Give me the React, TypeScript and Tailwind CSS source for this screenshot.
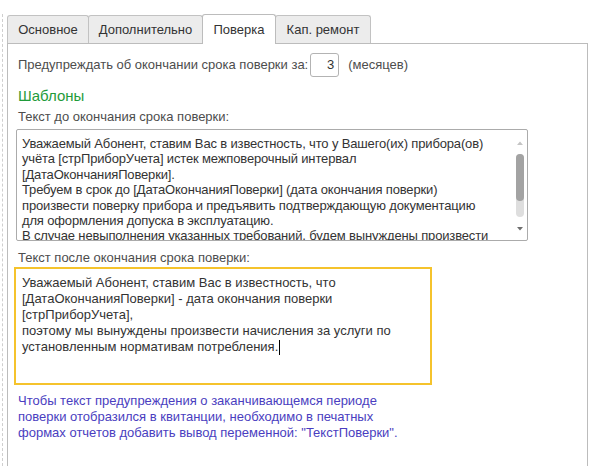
import React from 'react';

const beforeText = [
  'Уважаемый Абонент, ставим Вас в известность, что у Вашего(их) прибора(ов)',
  'учёта [стрПриборУчета] истек межповерочный интервал',
  '[ДатаОкончанияПоверки].',
  'Требуем в срок до [ДатаОкончанияПоверки] (дата окончания поверки)',
  'произвести поверку прибора и предъявить подтверждающую документацию',
  'для оформления допуска в эксплуатацию.',
  'В случае невыполнения указанных требований, будем вынуждены произвести',
];

const afterText = [
  'Уважаемый Абонент, ставим Вас в известность, что',
  '[ДатаОкончанияПоверки] - дата окончания поверки',
  '[стрПриборУчета],',
  'поэтому мы вынуждены произвести начисления за услуги по',
];

const hint = [
  'Чтобы текст предупреждения о заканчивающемся периоде',
  'поверки отобразился в квитанции, необходимо в печатных',
  'формах отчетов добавить вывод переменной: "ТекстПоверки".',
];

const tabs = [
  { label: 'Основное', w: 'w-[82px]' },
  { label: 'Дополнительно', w: 'w-[115px]' },
  { label: 'Поверка', w: 'w-[74px]', active: true },
  { label: 'Кап. ремонт', w: 'w-[96px]' },
];

function Scrollbar() {
  return (
    <div className="absolute right-[3px] top-[10px] w-[8px] flex flex-col items-center">
      <svg width="8" height="6" viewBox="0 0 8 6">
        <path d="M1 5 L4 1.5 L7 5 Z" fill="#c4c4c4" />
      </svg>
      <div className="mt-[8px] h-[63px] w-[8px] rounded-full bg-[#dedede] flex flex-col">
        <div className="h-[47px] w-[8px] rounded-full bg-[#a3a3a3]" />
      </div>
      <svg className="mt-[9px]" width="8" height="6" viewBox="0 0 8 6">
        <path d="M1 1 L7 1 L4 4.5 Z" fill="#6e6e6e" />
      </svg>
    </div>
  );
}

export default function App() {
  return (
    <div className="w-[591px] h-[466px] bg-white overflow-hidden font-['Liberation_Sans',Arial,sans-serif] text-[13px] text-[#4d4d4d]">
      <div className="pl-[2px] pr-[3px] pt-[14px] h-full">
        <div className="h-full border-l border-dashed border-[#cfcfcf] pl-[4px] flex flex-col">
          <div className="flex items-end h-[29px]">
            {tabs.map((t, i) =>
              t.active ? (
                <div
                  key={t.label}
                  className={`${t.w} ${i > 0 ? '-ml-px' : ''} relative z-10 h-[30px] -mb-px bg-white border border-b-0 border-[#bcbcbc] rounded-t-[3px] flex items-center justify-center text-[#333]`}
                >
                  {t.label}
                </div>
              ) : (
                <div
                  key={t.label}
                  className={`${t.w} ${i > 0 ? '-ml-px' : ''} h-[28px] bg-[#ececec] border border-b-0 border-[#c2c2c2] rounded-t-[3px] flex items-center justify-center text-[#333]`}
                >
                  {t.label}
                </div>
              )
            )}
          </div>

          <div className="flex-1 w-[581px] border border-b-0 border-[#bcbcbc] pl-[8px] flex flex-col">
            <div className="mt-[9px] flex items-center h-[24px] ml-[2px]">
              <span>Предупреждать об окончании срока поверки за:</span>
              <div className="ml-[2px] w-[29px] h-[24px] border border-[#b3b3b3] rounded-[3px] flex items-center justify-end pr-[4px] text-[#333]">
                3
              </div>
              <span className="ml-[9px]">(месяцев)</span>
            </div>

            <div className="mt-[9px] ml-[2px] h-[20px] leading-[20px] text-[15px] text-[#1f9b3a]">Шаблоны</div>

            <div className="mt-[3px] ml-[2px] leading-[15px]">Текст до окончания срока поверки:</div>

            <div className="mt-[5px] relative w-[512px] h-[112px] border border-[#ababab] rounded-[2px] overflow-hidden pt-[6px] pl-[5px] text-[#333] leading-[15.4px] tracking-[-0.15px]">
              {beforeText.map((l) => (
                <div key={l} className="whitespace-nowrap">{l}</div>
              ))}
              <Scrollbar />
            </div>

            <div className="mt-[9px] ml-[2px] leading-[15px]">Текст после окончания срока поверки:</div>

            <div className="mt-[2px] -ml-[2px] w-[418px] h-[118px] border-2 border-[#f5c32c] pt-[6px] pl-[6px] text-[#333] leading-[16px]">
              {afterText.map((l) => (
                <div key={l} className="whitespace-nowrap">{l}</div>
              ))}
              <div className="whitespace-nowrap flex items-center">
                <span>установленным нормативам потребления.</span>
                <span className="ml-px inline-block w-px h-[15px] bg-black" />
              </div>
            </div>

            <div className="mt-[8px] ml-[2px] leading-[16px] text-[#4a3ec0]">
              {hint.map((l) => (
                <div key={l} className="whitespace-nowrap">{l}</div>
              ))}
            </div>
          </div>
        </div>
      </div>
    </div>
  );
}
